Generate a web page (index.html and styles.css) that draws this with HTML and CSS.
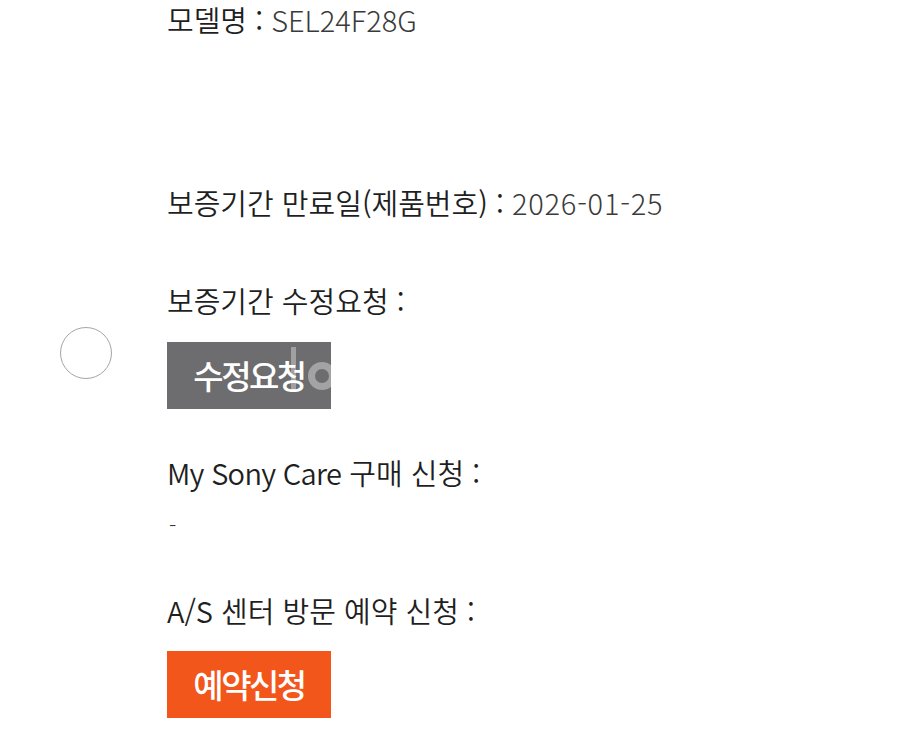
FILE: index.html
```html
<!DOCTYPE html>
<html lang="ko">
<head>
<meta charset="utf-8">
<link rel="stylesheet" href="styles.css">
</head>
<body>
<div class="page">
  <span class="ring"></span>
  <div class="row r1"><span class="label">모델명 :</span> <span class="value">SEL24F28G</span></div>
  <div class="row r2"><span class="label">보증기간 만료일(제품번호) :</span> <span class="value digits">2026-01-25</span></div>
  <div class="row r3"><span class="label">보증기간 수정요청 :</span></div>
  <div class="btn gray">
    <svg class="ghost" width="164" height="67" viewBox="0 0 164 67" aria-hidden="true">
      <rect x="124" y="5" width="5" height="43" fill="#a0a0a2"/>
      <circle cx="155" cy="34" r="10.5" fill="none" stroke="#a3a3a5" stroke-width="7"/>
    </svg>
    <span class="btn-text">수정요청</span>
  </div>
  <div class="row r4"><span class="label latin">My Sony Care</span> <span class="label">구매 신청 :</span></div>
  <div class="row dash"><span class="value">-</span></div>
  <div class="row r5"><span class="label">A/S 센터 방문 예약 신청 :</span></div>
  <div class="btn orange"><span class="btn-text">예약신청</span></div>
</div>
</body>
</html>
```
FILE: styles.css
```css
html, body {
  margin: 0;
  padding: 0;
  background: #ffffff;
}
body {
  font-family: "Noto Sans CJK KR", "Noto Sans", sans-serif;
  width: 905px;
  height: 750px;
  overflow: hidden;
}
.page {
  position: relative;
  padding-left: 167px;
  display: flex;
  flex-direction: column;
  align-items: flex-start;
}
.row {
  height: 40px;
  line-height: 40px;
  font-size: 29px;
  letter-spacing: 0;
  white-space: nowrap;
}
.label {
  color: #1f1f1f;
  font-weight: 350;
}
.latin {
  letter-spacing: -0.7px;
}
.value {
  color: #3a3a3a;
  font-weight: 300;
}
.digits {
  letter-spacing: 0.8px;
}
.r1 { height: 38px; line-height: 38px; }
.r2 { margin-top: 144px; }
.r3 { margin-top: 58px; }
.r4 { margin-top: 43px; }
.dash { margin-top: 12px; font-size: 22px; padding-left: 2px; }
.r5 { margin-top: 46px; }
.btn {
  position: relative;
  width: 164px;
  height: 67px;
  display: flex;
  align-items: center;
  justify-content: center;
  overflow: hidden;
}
.gray {
  margin-top: 22px;
  background: #6d6d6f;
}
.orange {
  margin-top: 21px;
  background: #f2561b;
}
.btn-text {
  position: relative;
  z-index: 1;
  color: #ffffff;
  font-size: 33px;
  font-weight: 500;
  letter-spacing: -2.5px;
  line-height: 1;
}
.ghost {
  position: absolute;
  left: 0;
  top: 0;
}
.ring {
  position: absolute;
  left: 60px;
  top: 327px;
  width: 50px;
  height: 50px;
  border: 1px solid #a5a5a8;
  border-radius: 50%;
}
```
